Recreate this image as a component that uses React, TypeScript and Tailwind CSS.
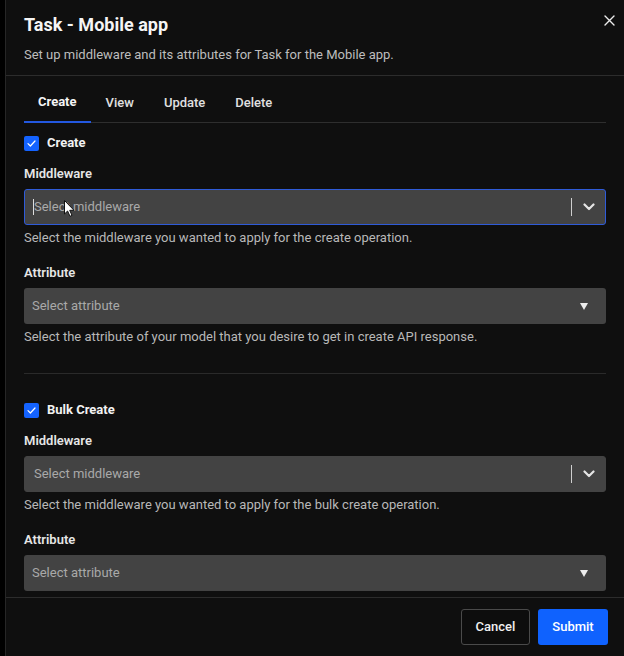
import React from "react";

const FONT = { fontFamily: '"Roboto", "Liberation Sans", sans-serif' };

function Chevron() {
  return (
    <svg width="12" height="8" viewBox="0 0 12 8" fill="none">
      <path d="M1.5 1.5 L6 6 L10.5 1.5" stroke="#e5e5e5" strokeWidth="2.2" strokeLinecap="round" strokeLinejoin="round" />
    </svg>
  );
}

function Triangle() {
  return (
    <svg width="8" height="7" viewBox="0 0 8 7">
      <path d="M0 0 H8 L4 7 Z" fill="#ededed" />
    </svg>
  );
}

function Check() {
  return (
    <div className="flex h-[15px] w-[15px] items-center justify-center rounded-[2px] bg-[#1463ff]">
      <svg width="9" height="7" viewBox="0 0 9 7" fill="none">
        <path d="M1 3.6 L3.4 6 L8 1" stroke="#ffffff" strokeWidth="1.2" strokeLinecap="round" strokeLinejoin="round" />
      </svg>
    </div>
  );
}

function Cursor() {
  return (
    <svg width="11" height="17" viewBox="0 0 11 17" className="absolute left-[39px] top-[10px]">
      <path d="M0.5 0.5 V14 L3.6 11 L6 16.3 L8 15.4 L5.7 10.3 H10 Z" fill="#ffffff" stroke="#111" strokeWidth="1" strokeLinejoin="round" />
    </svg>
  );
}

function MiddlewareSelect({ focused }: { focused?: boolean }) {
  return (
    <div
      className={
        focused
          ? "relative flex h-[36px] items-center rounded-[3px] border border-[#2f5bd8] bg-[#434343]"
          : "relative flex h-[36px] items-center rounded-[3px] border border-[#434343] bg-[#434343]"
      }
    >
      {focused ? (
        <div className="flex flex-1 items-center pl-[8px]">
          <span className="h-[16px] w-px bg-[#dddddd]" />
          <span className="text-[13px] text-[#a9a9a9]">Select middleware</span>
        </div>
      ) : (
        <span className="flex-1 pl-[9px] text-[13px] text-[#a9a9a9]">Select middleware</span>
      )}
      <span className="h-[18px] w-px bg-[#cfcfcf]" />
      <div className="flex w-[33px] items-center justify-center">
        <Chevron />
      </div>
      {focused ? <Cursor /> : null}
    </div>
  );
}

function AttributeSelect() {
  return (
    <div className="flex h-[36px] items-center rounded-[3px] bg-[#434343] pl-[8px] pr-[18px]">
      <span className="flex-1 text-[13px] text-[#a9a9a9]">Select attribute</span>
      <Triangle />
    </div>
  );
}

function Section({ title, op, attrText, first }: { title: string; op: string; attrText?: string; first?: boolean }) {
  return (
    <div className="flex flex-col">
      <div className="flex h-[20px] items-center gap-[8px]">
        <Check />
        <span className="text-[13px] font-bold text-[#f2f2f2]">{title}</span>
      </div>
      <div className="mt-[12px] flex h-[18px] items-center text-[13px] font-semibold text-[#e6e6e6]">Middleware</div>
      <div className="mt-[6px]">
        <MiddlewareSelect focused={first} />
      </div>
      <div className="mt-[4px] flex h-[18px] items-center text-[13px] text-[#b8b8b8]">
        Select the middleware you wanted to apply for the {op} operation.
      </div>
      <div className="mt-[17px] flex h-[18px] items-center text-[13px] font-semibold text-[#e6e6e6]">Attribute</div>
      <div className="mt-[6px]">
        <AttributeSelect />
      </div>
      {attrText ? (
        <div className="mt-[4px] flex h-[18px] items-center text-[13px] text-[#b8b8b8]">{attrText}</div>
      ) : null}
    </div>
  );
}

export default function App() {
  const tabs = ["Create", "View", "Update", "Delete"];
  return (
    <div className="flex h-[656px] w-[624px] overflow-hidden bg-black" style={FONT}>
      <div className="w-[5px] shrink-0 bg-black" />
      <div className="flex min-w-0 flex-1 flex-col border-l border-[#262626] bg-[#0f0f0f]">
        <div className="relative shrink-0 border-b border-[#2c2c2c] px-[18px] pb-[11px] pt-[12px]">
          <div className="flex h-[24px] items-center text-[18px] font-bold text-[#f5f5f5]">Task - Mobile app</div>
          <div className="mt-[10px] flex h-[18px] items-center text-[13px] text-[#bdbdbd]">
            Set up middleware and its attributes for Task for the Mobile app.
          </div>
          <button className="absolute right-[9px] top-[14px] flex h-[12px] w-[12px] items-center justify-center">
            <svg width="11" height="11" viewBox="0 0 11 11" fill="none">
              <path d="M1 1 L10 10 M10 1 L1 10" stroke="#ececec" strokeWidth="1.4" strokeLinecap="round" />
            </svg>
          </button>
        </div>

        <div className="flex min-h-0 flex-1 flex-col overflow-hidden px-[18px] pt-[7px]">
          <div className="flex h-[40px] shrink-0 border-b border-[#2e2e2e] pr-px">
            {tabs.map((t, i) =>
              i === 0 ? (
                <div
                  key={t}
                  className="-mb-px flex h-[40px] items-center border-b-2 border-[#2358e0] px-[14px] text-[13px] font-bold text-[#f5f5f5]"
                >
                  {t}
                </div>
              ) : (
                <div key={t} className="flex h-[39px] items-center px-[15px] text-[13px] font-medium text-[#e0e0e0]">
                  {t}
                </div>
              )
            )}
          </div>

          <div className="mt-[10px] shrink-0">
            <Section
              first
              title="Create"
              op="create"
              attrText="Select the attribute of your model that you desire to get in create API response."
            />
          </div>
          <div className="mt-[27px] h-px shrink-0 bg-[#2a2a2a]" />
          <div className="mt-[26px] shrink-0">
            <Section title="Bulk Create" op="bulk create" />
          </div>
        </div>

        <div className="flex h-[59px] shrink-0 items-start justify-end gap-[8px] border-t border-[#2c2c2c] pr-[16px] pt-[11px]">
          <button className="flex h-[36px] w-[69px] items-center justify-center rounded-[3px] border border-[#4a4a4a] bg-[#0d0d0d] text-[13px] font-medium text-[#f0f0f0]">
            Cancel
          </button>
          <button className="flex h-[36px] w-[70px] items-center justify-center rounded-[3px] bg-[#0f62fe] text-[13px] font-medium text-white">
            Submit
          </button>
        </div>
      </div>
    </div>
  );
}
